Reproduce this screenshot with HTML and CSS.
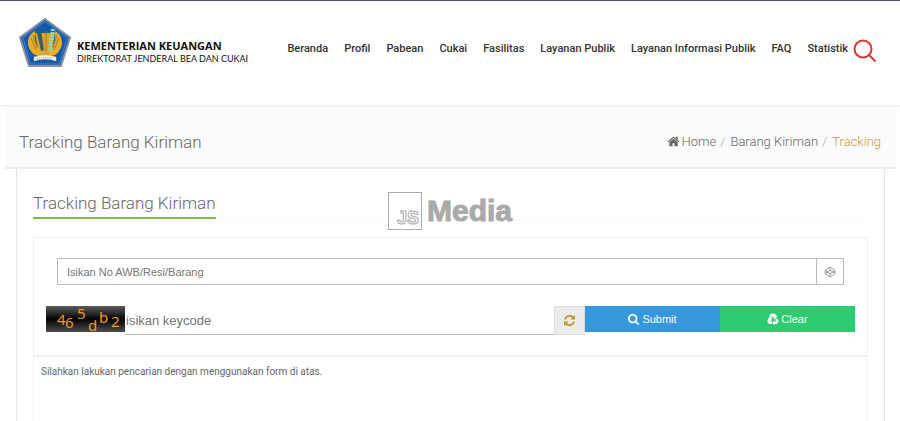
FILE: index.html
```html
<!DOCTYPE html>
<html lang="id">
<head>
<meta charset="utf-8">
<meta name="viewport" content="width=device-width, initial-scale=1">
<title>Tracking Barang Kiriman</title>
<link rel="stylesheet" href="styles.css">
</head>
<body>
<header class="site-header">
  <a class="brand" href="#">
    <svg class="emblem" viewBox="0 0 52 50" aria-hidden="true">
      <path d="M26 1 51 19.500 42 48H10L1 19.500Z" fill="#1559a8" stroke="#8b91a3" stroke-width="2"/>
      <path d="M26 3.500 48 20 40.500 46H11.500L4 20Z" fill="none" stroke="#3f83c8" stroke-width="1"/>
      <path d="M16 13C8 17 7 27 12 33c2 4 6 5 12 5V33c-6-2-9-10-8-20ZM36 13c8 4 9 14 4 20-2 4-6 5-12 5V33c6-2 9-10 8-20Z" fill="#e9ae25"/>
      <path d="M16 15h20l-3 15-4 4 2 3H21l2-3-4-4Z" fill="#dba62c"/>
      <path d="M18 15l4-3 3 20-3 1Z" fill="#3c5a68"/>
      <path d="M34 11 31 33" stroke="#7fe0d2" stroke-width="4" stroke-dasharray="2 1"/>
      <path d="M27 13v20M12 20l5 12M40 20l-5 12M14 17l4 13M38 17l-4 13" stroke="#a97b19" stroke-width="1" fill="none"/>
      <path d="M15 39q11-4 22 0v4q-11-4-22 0Z" fill="#f4f2e8" stroke="#d8c98d" stroke-width=".5"/>
      <path d="M18 40.500q8-2 16 0" stroke="#9b9b92" stroke-width="1" stroke-dasharray="1 1" fill="none"/>
    </svg>
    <span class="brand-text">
      <strong class="brand-name">KEMENTERIAN KEUANGAN</strong>
      <span class="brand-unit">DIREKTORAT JENDERAL BEA DAN CUKAI</span>
    </span>
  </a>
  <nav class="main-nav">
    <a href="#">Beranda</a>
    <a href="#">Profil</a>
    <a href="#">Pabean</a>
    <a href="#">Cukai</a>
    <a href="#">Fasilitas</a>
    <a href="#">Layanan Publik</a>
    <a href="#">Layanan Informasi Publik</a>
    <a href="#">FAQ</a>
    <a href="#">Statistik</a>
  </nav>
  <button class="search-button" type="button" aria-label="Cari">
    <svg viewBox="0 0 24 24" aria-hidden="true"><circle cx="10" cy="10" r="8.500" fill="none" stroke="#e2352d" stroke-width="2"/><path d="M16 16l6.500 6.500" stroke="#d9382f" stroke-width="2"/></svg>
  </button>
</header>

<div class="title-band">
  <h1>Tracking Barang Kiriman</h1>
  <nav class="breadcrumb" aria-label="Breadcrumb">
    <a href="#"><svg class="icon" viewBox="0 0 1792 1792" aria-hidden="true"><path d="M1472 992v480q0 26-19 45t-45 19h-384v-384h-256v384h-384q-26 0-45-19t-19-45v-480q0-1 .5-3t.5-3l575-474 575 474q1 2 1 6zm223-69l-62 74q-8 9-21 11h-3q-13 0-21-7l-692-577-692 577q-12 8-24 7-13-2-21-11l-62-74q-8-10-7-23.500t11-21.500l719-599q32-26 76-26t76 26l244 204v-195q0-14 9-23t23-9h192q14 0 23 9t9 23v408l219 182q10 8 11 21.500t-7 23.500z"/></svg>Home</a>
    <span class="slash">/</span>
    <a href="#">Barang Kiriman</a>
    <span class="slash">/</span>
    <span class="current" aria-current="page">Tracking</span>
  </nav>
</div>

<main class="panel">
  <div class="section-head"><h2>Tracking Barang Kiriman</h2></div>
  <form class="search-form">
    <div class="awb-group">
      <input type="text" placeholder="Isikan No AWB/Resi/Barang" aria-label="Isikan No AWB/Resi/Barang">
      <span class="addon">
        <svg viewBox="0 0 12 12" aria-hidden="true"><path d="M6 1l5 3.500v3L6 11 1 7.500v-3ZM6 1v3.200M6 7.800V11M1 4.500l5 3.300 5-3.300M1 7.500l5-3.300 5 3.300" fill="none" stroke="#999" stroke-linejoin="round"/></svg>
      </span>
    </div>
    <div class="key-row">
      <svg class="captcha" viewBox="0 0 79 26" role="img" aria-label="Kode keamanan">
        <defs><linearGradient id="shade" x1="0" y1="0" x2="0" y2="1"><stop offset="0" stop-color="#5c5c5f"/><stop offset=".5" stop-color="#030303"/><stop offset="1" stop-color="#4c4c4f"/></linearGradient></defs>
        <rect width="79" height="26" fill="url(#shade)"/>
        <g class="captcha-code"><text x="11" y="19">4</text><text x="19" y="22">6</text><text x="31" y="13">5</text><text x="42" y="25">d</text><text x="53" y="17">b</text><text x="65" y="21">2</text></g>
      </svg>
      <input class="keycode" type="text" placeholder="isikan keycode" aria-label="isikan keycode">
      <button class="refresh" type="button" aria-label="Muat ulang kode">
        <svg class="icon" viewBox="0 0 1792 1792" aria-hidden="true"><path d="M1639 1056q0 5-1 7-64 268-268 434.500t-478 166.500q-146 0-282.500-55t-243.500-157l-129 129q-19 19-45 19t-45-19-19-45v-448q0-26 19-45t45-19h448q26 0 45 19t19 45-19 45l-137 137q71 66 161 102t187 36q134 0 250-65t186-179q11-17 53-117 8-23 30-23h192q13 0 22.500 9.500t9.500 22.500zm25-800v448q0 26-19 45t-45 19h-448q-26 0-45-19t-19-45 19-45l138-138q-148-137-349-137-134 0-250 65t-186 179q-11 17-53 117-8 23-30 23h-199q-13 0-22.500-9.500t-9.500-22.500v-7q65-268 270-434.500t480-166.500q146 0 284 55.500t245 156.500l130-129q19-19 45-19t45 19 19 45z"/></svg>
      </button>
      <button class="action submit" type="submit">
        <svg class="icon" viewBox="0 0 1792 1792" aria-hidden="true"><path d="M1152 832q0-185-131.500-316.500t-316.500-131.500-316.500 131.500-131.500 316.500 131.500 316.500 316.500 131.500 316.500-131.500 131.500-316.500zm512 832q0 52-38 90t-90 38q-54 0-90-38l-343-342q-179 124-399 124-143 0-273.500-55.500t-225-150-150-225-55.500-273.500 55.500-273.500 150-225 225-150 273.500-55.500 273.500 55.500 225 150 150 225 55.500 273.500q0 220-124 399l343 343q37 37 37 90z"/></svg>Submit
      </button>
      <button class="action clear" type="reset">
        <svg class="icon" viewBox="0 0 24 24" aria-hidden="true"><path d="M7.500 1.500H16l2.500 4 2.300-1.200L18 11.500l-7-1.200 2.500-1.500L11.500 6 9 10.500 4 7.500ZM20.500 11l3 5.500L20 22h-5v2.500l-4.500-5 4.500-5V17h4l-2.800-4.500ZM1 10l7-1 2.500 7-2.500-1.300L6.500 17H10v5H4L.5 16.500l2.500-5Z"/></svg>Clear
      </button>
    </div>
  </form>
  <section class="result"><p>Silahkan lakukan pencarian dengan menggunakan form di atas.</p></section>
</main>

<div class="watermark">
  <span class="mark-box"><span class="mark-js">JS</span></span>
  <span class="mark-name">Media</span>
</div>
</body>
</html>
```
FILE: styles.css
```css
* { box-sizing: border-box; }

body {
  margin: 0;
  position: relative;
  min-height: 100vh;
  overflow-x: hidden;
  background: #fff;
  color: #666;
  font-family: Roboto, "Liberation Sans", sans-serif;
}

a { color: inherit; text-decoration: none; }
h1, h2, p { margin: 0; }
input, button { margin: 0; border: 0; border-radius: 0; font-family: "Liberation Sans", sans-serif; }
button { cursor: pointer; }
.icon { fill: currentColor; width: 13px; height: 13px; }

.site-header {
  display: flex;
  align-items: center;
  border-top: 1px solid #4b5080;
  border-bottom: 2px solid #f3f3f3;
  padding: 17px 23px 37px 19px;
}

.brand { display: flex; align-items: flex-start; gap: 6px; color: #111; }
.emblem { width: 52px; height: 50px; }
.brand-text {
  display: flex;
  flex-direction: column;
  padding-top: 20px;
  font-family: "Open Sans", sans-serif;
  white-space: nowrap;
}
.brand-name { font-size: 11px; line-height: 16px; }
.brand-unit { font-family: Lato, sans-serif; font-size: 9px; line-height: 10px; }

.main-nav {
  display: flex;
  gap: 16px;
  margin: 11px 0 0 auto;
  color: #333;
  font-size: 11px;
  font-weight: 500;
  line-height: 16px;
  white-space: nowrap;
}

.search-button { margin: 16px 0 0 5px; padding: 0; background: none; }
.search-button svg { display: block; width: 24px; height: 24px; }

.title-band {
  display: flex;
  align-items: center;
  justify-content: space-between;
  margin: 0 4px 0 5px;
  padding: 20px 15px 10px 14px;
  border-bottom: 2px solid #ededed;
  background: #fbfbfb;
}
h1, h2 { font-size: 17px; font-weight: 300; line-height: 30px; }

.breadcrumb {
  display: flex;
  gap: 4px;
  font-size: 13px;
  font-weight: 300;
  line-height: 20px;
}
.breadcrumb .icon { margin-right: 2px; vertical-align: -2px; }
.breadcrumb .slash { margin-right: 1px; color: #aaa; }
.breadcrumb .current { color: #cb9a37; }

.panel {
  margin: 0 15px 0 16px;
  padding: 20px 16px 0;
  border: 1px solid #e6e6e6;
  border-width: 0 1px;
}

.section-head { display: flex; border-bottom: 1px solid #fafafa; }
h2 { border-bottom: 2px solid #7cbb49; line-height: 28px; }

.search-form {
  margin-top: 17px;
  padding: 20px 12px;
  border: 1px solid #f1f1f1;
  border-bottom-width: 2px;
}

.awb-group { display: flex; margin: 0 11px; border: 1px solid #bbb; }
.awb-group input {
  flex: 1;
  min-width: 0;
  height: 25px;
  padding: 0 9px;
  font-size: 11px;
}
.addon {
  display: flex;
  align-items: center;
  justify-content: center;
  width: 27px;
  border-left: 1px solid #bbb;
}
.addon svg { width: 12px; height: 12px; }
input::placeholder { color: #757575; opacity: 1; }

.key-row { display: flex; align-items: flex-start; margin-top: 21px; }
.captcha { width: 79px; height: 26px; overflow: visible; }
.captcha-code { fill: #ee9a1c; font: 15px "Noto Sans", sans-serif; }
.keycode {
  flex: 1;
  min-width: 0;
  height: 29px;
  padding: 0 1px;
  border-bottom: 1px solid #bbb;
  font-size: 13px;
}
.refresh {
  display: flex;
  align-items: center;
  justify-content: center;
  width: 31px;
  height: 29px;
  padding: 0;
  border: 1px solid #ddd;
  background: #ebebeb;
  color: #c1922f;
}
.action {
  display: flex;
  align-items: center;
  justify-content: center;
  gap: 2px;
  width: 135px;
  height: 26px;
  padding: 0;
  color: #fff;
  font-size: 11px;
}
.action .icon { width: 12px; height: 12px; }
.submit { background: #3498db; }
.clear { background: #2ecc71; }

.result {
  min-height: 65px;
  padding: 7px;
  border: 1px solid #f3f3f3;
  border-width: 0 1px;
  font-size: 10px;
  line-height: 16px;
}

.watermark {
  position: absolute;
  top: 192px;
  left: 50%;
  display: flex;
  align-items: center;
  gap: 5px;
  margin-left: -62px;
  color: #aaa;
  font-family: "Liberation Sans", sans-serif;
  pointer-events: none;
}
.mark-box {
  display: flex;
  align-items: flex-end;
  justify-content: flex-end;
  width: 34px;
  height: 38px;
  padding-right: 2px;
  border: 1px solid #aaa;
  background: #fff;
}
.mark-js {
  color: #fff;
  font-size: 18px;
  font-weight: 700;
  line-height: 22px;
  -webkit-text-stroke: 1px #aaa;
}
.mark-name {
  font-size: 30px;
  font-weight: 700;
  line-height: 38px;
  -webkit-text-stroke: 1px #aaa;
}
```
